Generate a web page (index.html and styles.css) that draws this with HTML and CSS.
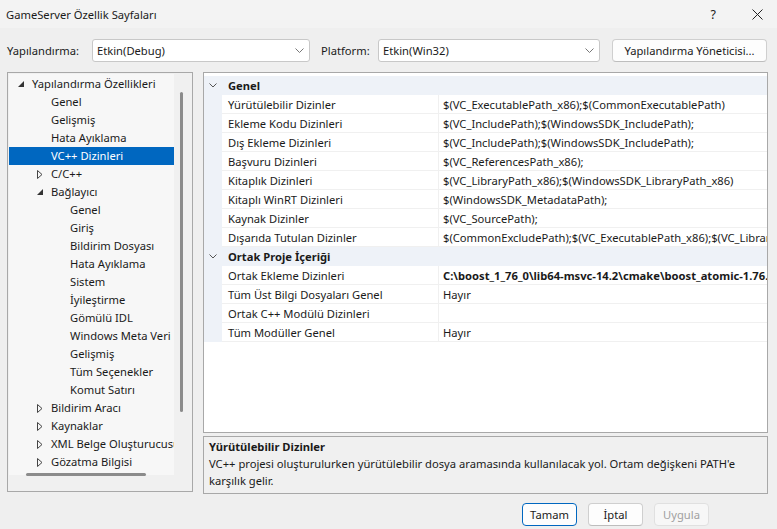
FILE: index.html
```html
<!DOCTYPE html>
<html lang="tr">
<head>
  <meta charset="UTF-8" />
  <title>GameServer Özellik Sayfaları</title>
  <link rel="stylesheet" href="styles.css">
</head>
<body>
  <div class="titlebar">
    <span class="title">GameServer Özellik Sayfaları</span>
    <span class="help">?</span>
    <svg class="close" width="11" height="11" viewBox="0 0 11 11"><path d="M0.5 0.5L10.5 10.5M10.5 0.5L0.5 10.5" stroke="#222" stroke-width="1"/></svg>
  </div>

  <div class="toolbar">
    <label class="lbl">Yapılandırma:</label>
    <div class="select cfg">Etkin(Debug)<svg class="chev" width="9" height="5" viewBox="0 0 9 5"><path d="M0.5 0.5L4.5 4.5L8.5 0.5" fill="none" stroke="#777"/></svg></div>
    <label class="lbl plat">Platform:</label>
    <div class="select plat-sel">Etkin(Win32)<svg class="chev" width="9" height="5" viewBox="0 0 9 5"><path d="M0.5 0.5L4.5 4.5L8.5 0.5" fill="none" stroke="#777"/></svg></div>
    <button class="btn manager">Yapılandırma Yöneticisi...</button>
  </div>

  <div class="main">
    <div class="tree">
      <div class="tree-list">
        <div class="node l0"><span class="tw"><svg width="6" height="6" viewBox="0 0 6 6"><polygon points="6,0 6,6 0,6" fill="#333"/></svg></span>Yapılandırma Özellikleri</div>
        <div class="node l1"><span class="tw"></span>Genel</div>
        <div class="node l1"><span class="tw"></span>Gelişmiş</div>
        <div class="node l1"><span class="tw"></span>Hata Ayıklama</div>
        <div class="node l1 selected"><span class="tw"></span>VC++ Dizinleri</div>
        <div class="node l1"><span class="tw"><svg width="6" height="9" viewBox="0 0 6 9"><polygon points="0.5,0.5 5,4.5 0.5,8.5" fill="none" stroke="#444"/></svg></span>C/C++</div>
        <div class="node l1"><span class="tw"><svg width="6" height="6" viewBox="0 0 6 6"><polygon points="6,0 6,6 0,6" fill="#333"/></svg></span>Bağlayıcı</div>
        <div class="node l2"><span class="tw"></span>Genel</div>
        <div class="node l2"><span class="tw"></span>Giriş</div>
        <div class="node l2"><span class="tw"></span>Bildirim Dosyası</div>
        <div class="node l2"><span class="tw"></span>Hata Ayıklama</div>
        <div class="node l2"><span class="tw"></span>Sistem</div>
        <div class="node l2"><span class="tw"></span>İyileştirme</div>
        <div class="node l2"><span class="tw"></span>Gömülü IDL</div>
        <div class="node l2"><span class="tw"></span>Windows Meta Veri</div>
        <div class="node l2"><span class="tw"></span>Gelişmiş</div>
        <div class="node l2"><span class="tw"></span>Tüm Seçenekler</div>
        <div class="node l2"><span class="tw"></span>Komut Satırı</div>
        <div class="node l1"><span class="tw"><svg width="6" height="9" viewBox="0 0 6 9"><polygon points="0.5,0.5 5,4.5 0.5,8.5" fill="none" stroke="#444"/></svg></span>Bildirim Aracı</div>
        <div class="node l1"><span class="tw"><svg width="6" height="9" viewBox="0 0 6 9"><polygon points="0.5,0.5 5,4.5 0.5,8.5" fill="none" stroke="#444"/></svg></span>Kaynaklar</div>
        <div class="node l1"><span class="tw"><svg width="6" height="9" viewBox="0 0 6 9"><polygon points="0.5,0.5 5,4.5 0.5,8.5" fill="none" stroke="#444"/></svg></span>XML Belge Oluşturucusu</div>
        <div class="node l1"><span class="tw"><svg width="6" height="9" viewBox="0 0 6 9"><polygon points="0.5,0.5 5,4.5 0.5,8.5" fill="none" stroke="#444"/></svg></span>Gözatma Bilgisi</div>
      </div>
      <div class="vscroll"><div class="vthumb"></div></div>
      <div class="hscroll"><div class="hthumb"></div></div>
    </div>

    <div class="right">
      <div class="grid">
        <div class="cat"><span class="gut"><svg width="8" height="5" viewBox="0 0 8 5"><path d="M0.5 0.5L4 4L7.5 0.5" fill="none" stroke="#555"/></svg></span>Genel</div>
        <div class="row"><span class="gut"></span><span class="name">Yürütülebilir Dizinler</span><span class="val">$(VC_ExecutablePath_x86);$(CommonExecutablePath)</span></div>
        <div class="row"><span class="gut"></span><span class="name">Ekleme Kodu Dizinleri</span><span class="val">$(VC_IncludePath);$(WindowsSDK_IncludePath);</span></div>
        <div class="row"><span class="gut"></span><span class="name">Dış Ekleme Dizinleri</span><span class="val">$(VC_IncludePath);$(WindowsSDK_IncludePath);</span></div>
        <div class="row"><span class="gut"></span><span class="name">Başvuru Dizinleri</span><span class="val">$(VC_ReferencesPath_x86);</span></div>
        <div class="row"><span class="gut"></span><span class="name">Kitaplık Dizinleri</span><span class="val">$(VC_LibraryPath_x86);$(WindowsSDK_LibraryPath_x86)</span></div>
        <div class="row"><span class="gut"></span><span class="name">Kitaplı WinRT Dizinleri</span><span class="val">$(WindowsSDK_MetadataPath);</span></div>
        <div class="row"><span class="gut"></span><span class="name">Kaynak Dizinler</span><span class="val">$(VC_SourcePath);</span></div>
        <div class="row"><span class="gut"></span><span class="name">Dışarıda Tutulan Dizinler</span><span class="val">$(CommonExcludePath);$(VC_ExecutablePath_x86);$(VC_LibraryPath_x86)</span></div>
        <div class="cat"><span class="gut"><svg width="8" height="5" viewBox="0 0 8 5"><path d="M0.5 0.5L4 4L7.5 0.5" fill="none" stroke="#555"/></svg></span>Ortak Proje İçeriği</div>
        <div class="row"><span class="gut"></span><span class="name">Ortak Ekleme Dizinleri</span><span class="val bold">C:\boost_1_76_0\lib64-msvc-14.2\cmake\boost_atomic-1.76.0</span></div>
        <div class="row"><span class="gut"></span><span class="name">Tüm Üst Bilgi Dosyaları Genel</span><span class="val">Hayır</span></div>
        <div class="row"><span class="gut"></span><span class="name">Ortak C++ Modülü Dizinleri</span><span class="val"></span></div>
        <div class="row"><span class="gut"></span><span class="name">Tüm Modüller Genel</span><span class="val">Hayır</span></div>
      </div>
      <div class="desc">
        <div class="desc-title">Yürütülebilir Dizinler</div>
        <div class="desc-text">VC++ projesi oluşturulurken yürütülebilir dosya aramasında kullanılacak yol. Ortam değişkeni PATH'e karşılık gelir.</div>
      </div>
    </div>
  </div>

  <div class="footer">
    <button class="btn ok">Tamam</button>
    <button class="btn">İptal</button>
    <button class="btn disabled">Uygula</button>
  </div>
</body>
</html>
```

FILE: styles.css
```css
body { margin: 0; width: 777px; height: 529px; background: #efefef; font-family: "Noto Sans", "Open Sans", sans-serif; font-size: 11.2px; color: #1a1a1a; overflow: hidden; }

.titlebar { height: 28px; background: #f3f3f3; display: flex; align-items: center; padding-left: 6px; padding-right: 14px; }
.title { flex: 1; font-size: 11.2px; }
.help { font-size: 12.5px; margin-right: 36px; }
.close { display: block; }

.toolbar { display: flex; align-items: center; height: 24px; margin-top: 10px; padding-left: 7px; }
.lbl { width: 85px; flex: none; }
.lbl.plat { width: 57px; margin-left: 11px; }
.select { height: 23px; box-sizing: border-box; border: 1px solid #c8c8c8; background: #fff; border-radius: 3px; display: flex; align-items: center; padding-left: 4px; justify-content: space-between; padding-right: 5px; flex: none; }
.select.cfg { width: 218px; }
.select.plat-sel { width: 222px; }
.chev { display: block; }

.btn { font-family: inherit; font-size: 11.2px; color: #1a1a1a; background: #fdfdfd; border: 1px solid #cfcfcf; border-bottom-color: #bdbdbd; border-radius: 4px; height: 23px; padding: 0; }
.btn.manager { margin-left: 12px; width: 155px; }

.main { display: flex; margin-top: 10px; padding-left: 7px; gap: 10px; }

.tree { position: relative; width: 186px; height: 420px; box-sizing: border-box; border: 1px solid #a8a8a8; background: #f0f0f0; }
.tree-list { position: absolute; left: 1px; top: 1px; width: 165px; height: 400px; background: #f7f7f7; overflow: hidden; padding-top: 1px; }
.node { height: 18px; line-height: 18px; display: flex; align-items: center; white-space: nowrap; color: #1a1a1a; }
.node .tw { width: 14px; flex: none; display: flex; align-items: center; }
.node .tw svg { display: block; }
.node.l0 { padding-left: 9px; }
.node.l1 { padding-left: 28px; }
.node.l2 { padding-left: 47px; }
.node.selected { background: #0067c0; color: #fff; }
.vscroll { position: absolute; right: 0; top: 0; width: 18px; height: 400px; }
.vthumb { position: absolute; left: 6px; top: 19px; width: 3px; height: 320px; background: #8b8b8b; border-radius: 2px; }
.hscroll { position: absolute; left: 0; bottom: 0; width: 166px; height: 18px; }
.hthumb { position: absolute; left: 18px; top: 0; width: 120px; height: 3px; background: #8b8b8b; border-radius: 2px; }

.right { display: flex; flex-direction: column; gap: 3px; }
.grid { width: 565px; height: 361px; box-sizing: border-box; border: 1px solid #a8a8a8; background: #fff; padding-top: 3px; overflow: hidden; }
.cat { height: 19px; display: flex; align-items: center; background: #eef2f8; font-weight: bold; white-space: nowrap; }
.row { height: 19px; display: flex; align-items: stretch; white-space: nowrap; }
.gut { width: 18px; flex: none; background: #eef2f8; display: flex; align-items: center; justify-content: center; }
.cat .gut { margin-right: 6px; }
.name { width: 216px; flex: none; padding-left: 6px; box-sizing: border-box; border-bottom: 1px solid #f0f0f0; display: flex; align-items: center; }
.val { flex: 1; padding-left: 4px; border-left: 1px solid #f0f0f0; border-bottom: 1px solid #f0f0f0; display: flex; align-items: center; overflow: hidden; }
.val.bold { font-weight: bold; }

.desc { width: 565px; height: 58px; box-sizing: border-box; border: 1px solid #a8a8a8; background: #f0f0f0; padding: 1px 5px; }
.desc-title { font-weight: bold; line-height: 17px; }
.desc-text { line-height: 17px; }

.footer { display: flex; justify-content: flex-end; gap: 11px; padding-right: 68px; margin-top: 9px; }
.footer .btn { width: 55px; }
.btn.ok { border: 1px solid #0067c0; }
.btn.disabled { color: #a0a0a0; border-color: #e0e0e0; background: #f7f7f7; }
```
